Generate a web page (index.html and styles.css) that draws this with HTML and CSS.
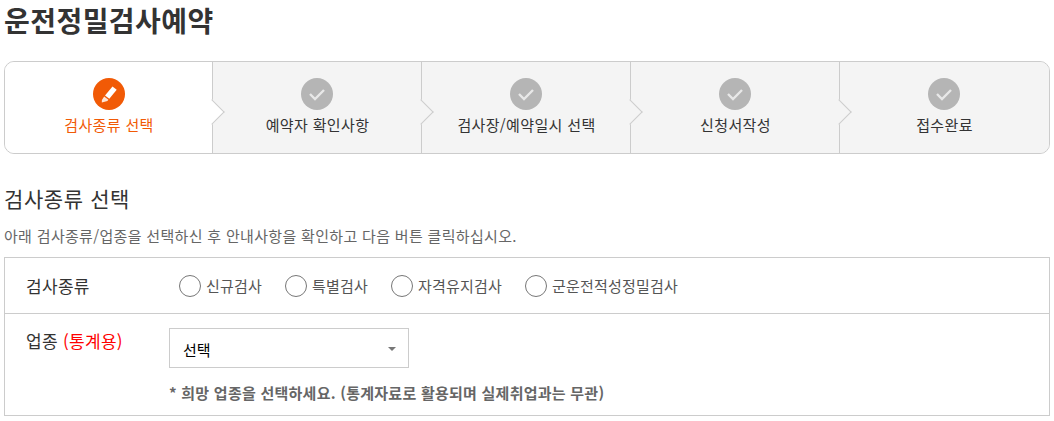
FILE: index.html
```html
<!DOCTYPE html>
<html lang="ko">
<head>
    <meta charset="UTF-8">
    <title>운전정밀검사예약</title>
    <link rel="stylesheet" href="styles.css">
</head>
<body>
<h1 class="page-title">운전정밀검사예약</h1>

<ol class="steps">
    <li class="step active">
        <span class="step-icon">
            <svg viewBox="0 0 32 32" width="32" height="32">
                <path d="M19.5 8.6l4.2 3.2-7.4 9-4.3-3.2z" fill="#fff"/>
                <path d="M11.2 18.6l4.2 3.2-1 1.1-5.6 1.6.1-2.4z" fill="#fff" opacity=".85"/>
            </svg>
        </span>
        <span class="step-name">검사종류 선택</span>
    </li>
    <li class="step">
        <span class="step-icon">
            <svg viewBox="0 0 32 32" width="32" height="32"><path d="M9 16l5 5 9-9" class="check"/></svg>
        </span>
        <span class="step-name">예약자 확인사항</span>
    </li>
    <li class="step">
        <span class="step-icon">
            <svg viewBox="0 0 32 32" width="32" height="32"><path d="M9 16l5 5 9-9" class="check"/></svg>
        </span>
        <span class="step-name">검사장/예약일시 선택</span>
    </li>
    <li class="step">
        <span class="step-icon">
            <svg viewBox="0 0 32 32" width="32" height="32"><path d="M9 16l5 5 9-9" class="check"/></svg>
        </span>
        <span class="step-name">신청서작성</span>
    </li>
    <li class="step">
        <span class="step-icon">
            <svg viewBox="0 0 32 32" width="32" height="32"><path d="M9 16l5 5 9-9" class="check"/></svg>
        </span>
        <span class="step-name">접수완료</span>
    </li>
</ol>

<h2 class="section-title">검사종류 선택</h2>
<p class="section-desc">아래 검사종류/업종을 선택하신 후 안내사항을 확인하고 다음 버튼 클릭하십시오.</p>

<div class="form-box">
    <div class="form-row type-row">
        <div class="form-label">검사종류</div>
        <div class="radios">
            <label class="radio"><span class="radio-mark"></span>신규검사</label>
            <label class="radio"><span class="radio-mark"></span>특별검사</label>
            <label class="radio"><span class="radio-mark"></span>자격유지검사</label>
            <label class="radio"><span class="radio-mark"></span>군운전적성정밀검사</label>
        </div>
    </div>
    <div class="form-row job-row">
        <div class="form-label">업종 <span class="red">(통계용)</span></div>
        <div class="job-field">
            <div class="select-box">선택<span class="caret"></span></div>
            <p class="note">* 희망 업종을 선택하세요. (통계자료로 활용되며 실제취업과는 무관)</p>
        </div>
    </div>
</div>
</body>
</html>
```

FILE: styles.css
```css
* {
    margin: 0;
    padding: 0;
    box-sizing: border-box;
}
body {
    padding: 0 4px;
    background: #fff;
    color: #333;
    font-family: "Noto Sans CJK KR", "Noto Sans", sans-serif;
    overflow: hidden;
}
.page-title {
    height: 61px;
    font-size: 28px;
    line-height: 40px;
    font-weight: 700;
    letter-spacing: 0.45px;
}

/* 단계 표시 */
.steps {
    display: flex;
    height: 93px;
    list-style: none;
    border: 1px solid #ccc;
    border-radius: 10px;
    background: #f4f4f4;
}
.step {
    position: relative;
    width: 209px;
    display: flex;
    flex-direction: column;
    align-items: center;
    padding-top: 16px;
    background: #f4f4f4;
}
.step:first-child {
    width: 208px;
    background: #fff;
    border-radius: 9px 0 0 9px;
}
.step:last-child {
    flex: 1;
    border-radius: 0 9px 9px 0;
}
.step:not(:last-child)::after {
    content: "";
    position: absolute;
    top: 0;
    bottom: 0;
    right: 0;
    width: 1px;
    background: #ccc;
}
/* 화살표 */
.step:not(:last-child)::before {
    content: "";
    position: absolute;
    z-index: 1;
    top: 41px;
    right: -8px;
    width: 17px;
    height: 17px;
    background: inherit;
    border-top: 1px solid #ccc;
    border-right: 1px solid #ccc;
    transform: rotate(45deg);
}
.step-icon {
    position: relative;
    z-index: 2;
    width: 32px;
    height: 32px;
    margin-right: 2px;
    border-radius: 50%;
    background: #b5b5b5;
}
.step-icon svg {
    display: block;
}
.check {
    fill: none;
    stroke: #e8e8e8;
    stroke-width: 2.4;
}
.active .step-icon {
    margin-right: 0;
    background: #f15a06;
}
.step-name {
    position: relative;
    z-index: 2;
    margin-top: 4px;
    font-size: 15px;
    line-height: 22px;
    letter-spacing: 0.35px;
}
.active .step-name {
    color: #f15a06;
}

/* 본문 */
.section-title {
    margin-top: 30px;
    font-size: 21px;
    line-height: 28px;
    font-weight: 400;
    letter-spacing: 0.6px;
}
.section-desc {
    margin-top: 13px;
    font-size: 15px;
    line-height: 22px;
    color: #666;
    letter-spacing: 0.32px;
}
.form-box {
    margin-top: 10px;
    height: 159px;
    border: 1px solid #ccc;
}
.form-row {
    display: flex;
}
.form-label {
    width: 164px;
    padding-left: 21px;
    font-size: 17px;
    line-height: 24px;
    letter-spacing: 0.3px;
    flex-shrink: 0;
}
.type-row {
    height: 56px;
    align-items: center;
    border-bottom: 1px solid #ccc;
}
.radios {
    display: flex;
    gap: 23px;
    padding-left: 10px;
}
.radio {
    display: flex;
    align-items: center;
    gap: 5px;
    font-size: 15px;
    line-height: 22px;
    color: #555;
    letter-spacing: 0.2px;
}
.radio-mark {
    width: 22px;
    height: 22px;
    border: 1px solid #777;
    border-radius: 50%;
    background: #fff;
}
.job-row {
    padding-top: 14px;
}
.job-row .form-label {
    padding-top: 1px;
}
.red {
    color: #f00;
}
.select-box {
    position: relative;
    width: 240px;
    height: 40px;
    padding-left: 13px;
    border: 1px solid #ccc;
    font-size: 15px;
    line-height: 42px;
    color: #000;
}
.caret {
    position: absolute;
    top: 18px;
    right: 12px;
    border-left: 4px solid transparent;
    border-right: 4px solid transparent;
    border-top: 4px solid #777;
}
.note {
    margin-top: 14px;
    font-size: 15px;
    line-height: 22px;
    font-weight: 700;
    color: #666;
    letter-spacing: 0.25px;
}
```
